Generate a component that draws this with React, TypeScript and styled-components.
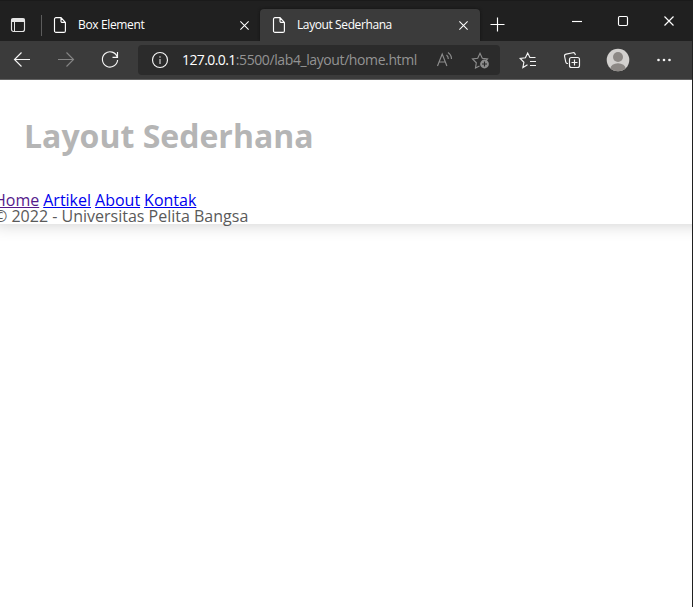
import React from "react";
import styled, { createGlobalStyle } from "styled-components";

const GlobalStyle = createGlobalStyle`
  * { box-sizing: border-box; }
  body { margin: 0; background: #fff; overflow: hidden; }
`;

const Window = styled.div`
  width: 693px;
  height: 607px;
  display: flex;
  flex-direction: column;
  overflow: hidden;
  border-right: 1px solid #202020;
  background: #fff;
  font-family: "Open Sans", "Noto Sans", sans-serif;
`;

const TitleBar = styled.div`
  height: 41px;
  flex: none;
  display: flex;
  align-items: flex-end;
  background: #202020;
  color: #fff;
  border-top: 1px solid #1a1a1a;
`;

const TabActions = styled.div`
  width: 41px;
  height: 32px;
  padding: 8px 0 0 10px;
  color: #e4e4e4;
`;

const Divider = styled.div`
  width: 1px;
  height: 21px;
  margin-bottom: 5px;
  background: #5c5c5c;
`;

const Tab = styled.div<{ $active?: boolean }>`
  display: flex;
  align-items: center;
  width: ${(p) => (p.$active ? 220 : 218)}px;
  height: 32px;
  padding: 0 ${(p) => (p.$active ? 11 : 10)}px 0 ${(p) => (p.$active ? 12 : 11)}px;
  border-radius: 4px 4px 0 0;
  background: ${(p) => (p.$active ? "#3b3b3b" : "transparent")};
  box-shadow: ${(p) => (p.$active ? "0 0 3px #111" : "none")};
`;

const TabTitle = styled.span<{ $tracking: number }>`
  flex: 1;
  margin-left: 11px;
  font-size: 12px;
  line-height: 16px;
  white-space: nowrap;
  letter-spacing: ${(p) => p.$tracking}px;
`;

const NewTab = styled.div`
  width: 34px;
  height: 32px;
  padding: 8px 0 0 10px;
`;

const WindowControls = styled.div`
  display: flex;
  flex: 1;
  justify-content: space-between;
  align-self: flex-start;
  padding: 14px 17px 0 57px;
`;

const Toolbar = styled.div`
  height: 39px;
  flex: none;
  display: flex;
  align-items: flex-start;
  background: #3b3b3b;
  border-bottom: 1px solid #626262;
  color: #f5f5f5;
`;

const NavButtons = styled.div`
  display: flex;
  gap: 24px;
  width: 138px;
  padding: 9px 0 0 12px;
`;

const AddressBar = styled.div`
  display: flex;
  align-items: center;
  width: 362px;
  height: 30px;
  margin-top: 4px;
  padding: 0 9px 0 12px;
  border-radius: 4px;
  background: #2b2b2b;
`;

const Url = styled.div`
  flex: 1;
  margin-left: 12px;
  font-size: 14px;
  line-height: 20px;
  white-space: nowrap;
  color: #939393;
`;

const Host = styled.span`
  color: #fff;
  letter-spacing: -0.59px;
`;

const UrlPath = styled.span`
  letter-spacing: -0.4px;
`;

const AddressActions = styled.div`
  display: flex;
  gap: 16px;
  color: #8d8d8d;
`;

const BrowserActions = styled.div`
  display: flex;
  align-items: center;
  justify-content: space-between;
  flex: 1;
  height: 38px;
  padding: 0 18px;
`;

const Icon = styled.svg<{ $dim?: boolean }>`
  display: block;
  flex: none;
  fill: none;
  stroke: ${(p) => (p.$dim ? "#858585" : "currentColor")};
  stroke-width: 1.15;
`;

const Viewport = styled.main`
  flex: 1;
  overflow: hidden;
`;

const Container = styled.div`
  width: 980px;
  margin-left: -6px;
  background: #fff;
  box-shadow: 0 0 1em #cccccc;
  font-size: 16px;
  line-height: 16px;
  color: #5a5a5a;
`;

const Header = styled.header`
  padding: 40px 30px;
`;

const Heading = styled.h1`
  margin: 0;
  font-size: 32px;
  line-height: 32px;
  color: #b5b5b5;
  white-space: nowrap;
`;

const SiteNav = styled.nav`
  display: flex;
  gap: 4px;
  height: 16px;
`;

const NavLink = styled.a<{ $visited?: boolean }>`
  color: ${(p) => (p.$visited ? "#551a8b" : "#0000ee")};
  text-decoration: underline;
`;

const Footer = styled.footer`
  height: 16px;
`;

const PageIcon = () => (
  <Icon width="14" height="18" viewBox="0 0 14 18">
    <path d="M3 1.6h5l4.4 4.8v8.5a1.5 1.5 0 0 1-1.5 1.5H3a1.5 1.5 0 0 1-1.5-1.5V3.1A1.5 1.5 0 0 1 3 1.6ZM8 1.6v3.6a1.2 1.2 0 0 0 1.2 1.2h3.2" />
  </Icon>
);

const CloseIcon = ({ size }: { size: number }) => (
  <Icon width={size} height={size} viewBox="0 0 12 12">
    <path d="m1.5 1.5 9 9m0-9-9 9" />
  </Icon>
);

export default function App() {
  return (
    <Window>
      <GlobalStyle />
      <TitleBar>
        <TabActions>
          <Icon width="16" height="16" viewBox="0 0 16 16">
            <rect x="1.500" y="1.500" width="13" height="13" rx="2" />
            <path d="M2 2h12v2.500H2z" fill="currentColor" />
            <path d="M4.500 5v9" strokeWidth="1" />
          </Icon>
        </TabActions>
        <Divider />
        <Tab>
          <PageIcon />
          <TabTitle $tracking={-0.35}>Box Element</TabTitle>
          <CloseIcon size={11} />
        </Tab>
        <Tab $active>
          <PageIcon />
          <TabTitle $tracking={-0.4}>Layout Sederhana</TabTitle>
          <CloseIcon size={11} />
        </Tab>
        <NewTab>
          <Icon width="15" height="15" viewBox="0 0 15 15">
            <path d="M7.5 .5v14M.5 7.5h14" />
          </Icon>
        </NewTab>
        <WindowControls>
          <Icon width="12" height="12" viewBox="0 0 12 12">
            <path d="M1 6.5h10" />
          </Icon>
          <Icon width="12" height="12" viewBox="0 0 12 12">
            <rect x="1.5" y="1.5" width="9" height="9" rx="1.2" />
          </Icon>
          <CloseIcon size={12} />
        </WindowControls>
      </TitleBar>
      <Toolbar>
        <NavButtons>
          <Icon width="20" height="20" viewBox="0 0 20 20">
            <path d="M18 9.5H2.5M9.5 2.5l-7 7 7 7" />
          </Icon>
          <Icon $dim width="20" height="20" viewBox="0 0 20 20">
            <path d="M2 9.5h15.5M10.5 2.5l7 7-7 7" />
          </Icon>
          <Icon width="20" height="20" viewBox="0 0 20 20">
            <path d="M17.3 7.2A7.6 7.6 0 1 0 17.6 10M17.5 2v5.4h-5" />
          </Icon>
        </NavButtons>
        <AddressBar>
          <Icon width="20" height="20" viewBox="0 0 20 20">
            <circle cx="10" cy="10" r="7.5" />
            <path d="M10 9v5M10 6.2v1.6" strokeWidth="1.4" stroke="#b5b5b5" />
          </Icon>
          <Url>
            <Host>127.0.0.1</Host>
            <UrlPath>:5500/lab4_layout/home.html</UrlPath>
          </Url>
          <AddressActions>
            <Icon width="20" height="20" viewBox="0 0 20 20">
              <path d="m2.5 16 4.7-12 4.7 12M4 12h6.4M11.5 5a5 5 0 0 1 1.8 4M13 2.5a8 8 0 0 1 3.5 6.500" />
            </Icon>
            <Icon width="20" height="20" viewBox="0 0 20 20">
              <path d="m8.5 16-4 2 .8-5.2L1.5 9l5.2-.8L9 3.3l2.3 4.9 5.2.8-1.5 1.600" />
              <circle cx="13.5" cy="14" r="4.4" fill="currentColor" stroke="none" />
              <path d="M13.5 11.500v5M11 14h5" stroke="#2b2b2b" />
            </Icon>
          </AddressActions>
        </AddressBar>
        <BrowserActions>
          <Icon width="20" height="20" viewBox="0 0 20 20">
            <path d="m9.5 14.800-4.600 2.700 1-5.200-3.700-3.800 5.200-.7L9.700 3l2.200 4.500h5.600M12 11.500h6M12 15.500h6" />
          </Icon>
          <Icon width="20" height="20" viewBox="0 0 20 20">
            <path d="M6 13.500c-1.200.2-1.900-.3-2.200-1.400L2.600 6.500c-.3-1.300.2-2.100 1.500-2.400l6.800-1.400c1.100-.2 1.900.2 2.200 1.300l.3 1" />
            <rect x="7.500" y="7.500" width="10" height="10" rx="2" />
            <path d="M12.500 9.500v6M9.500 12.500h6" />
          </Icon>
          <Icon width="24" height="24" viewBox="0 0 24 24">
            <clipPath id="avatar"><circle cx="12" cy="12" r="11.3" /></clipPath>
            <g clipPath="url(#avatar)" stroke="none">
              <path d="M0 0h24v24H0z" fill="#d2d0ce" />
              <circle cx="12" cy="9" r="5" fill="#8c8885" />
              <ellipse cx="12" cy="20.500" rx="7.600" ry="5.200" fill="#8c8885" />
            </g>
          </Icon>
          <Icon width="20" height="20" viewBox="0 0 20 20">
            <g fill="currentColor" stroke="none">
              <circle cx="4.500" cy="10" r="1.300" />
              <circle cx="10" cy="10" r="1.300" />
              <circle cx="15.500" cy="10" r="1.300" />
            </g>
          </Icon>
        </BrowserActions>
      </Toolbar>
      <Viewport>
        <Container>
          <Header>
            <Heading>Layout Sederhana</Heading>
          </Header>
          <SiteNav>
            <NavLink $visited>Home</NavLink>
            <NavLink>Artikel</NavLink>
            <NavLink>About</NavLink>
            <NavLink>Kontak</NavLink>
          </SiteNav>
          <Footer>© 2022 - Universitas Pelita Bangsa</Footer>
        </Container>
      </Viewport>
    </Window>
  );
}
